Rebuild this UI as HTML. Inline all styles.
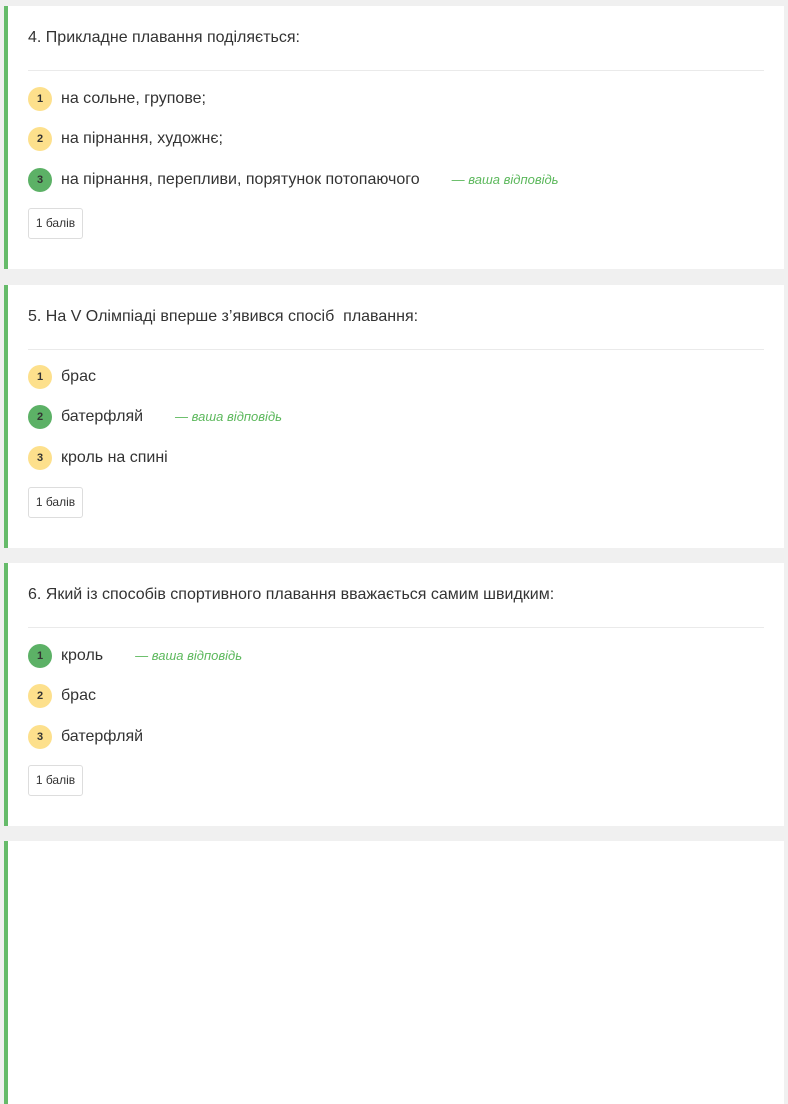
<!DOCTYPE html>
<html><head><meta charset="utf-8"><style>
*{margin:0;padding:0;box-sizing:border-box}
body{width:788px;height:849px;background:#f0f0f0;font-family:"Liberation Sans",Arial,sans-serif;color:#333;overflow:hidden;position:relative}
.card{position:absolute;left:4px;width:780px;height:263px;background:#fff;border-left:4px solid #66bb6a}
.q{position:absolute;left:20px;top:22px;font-size:16px;line-height:20px}
.hr{position:absolute;left:20px;right:20px;top:64px;border-top:1px solid #eaeaea}
.opt{position:absolute;left:20px;height:24px;font-size:16px;line-height:24px;display:flex;align-items:center;white-space:nowrap}
.c{width:24px;height:24px;border-radius:50%;background:#fde08c;font-size:11px;font-weight:bold;text-align:center;line-height:24px;margin-right:9px;color:#333}
.c.g{background:#5cb166}
.ans{color:#5cb85c;font-style:italic;font-size:13px;margin-left:32px}
.b{position:absolute;left:20px;top:202px;width:55px;height:31px;border:1px solid #ddd;border-radius:3px;font-size:12px;line-height:29px;text-align:center}
</style></head><body>
<div class="card" style="top:6px">
<div class="q">4. Прикладне плавання поділяється:</div><div class="hr"></div>
<div class="opt" style="top:81px"><span class="c">1</span>на сольне, групове;</div>
<div class="opt" style="top:121px"><span class="c">2</span>на пірнання, художнє;</div>
<div class="opt" style="top:162px"><span class="c g">3</span>на пірнання, перепливи, порятунок потопаючого<span class="ans">— ваша відповідь</span></div>
<div class="b">1 балів</div>
</div>
<div class="card" style="top:285px">
<div class="q">5. На V Олімпіаді вперше з’явився спосіб&nbsp; плавання:</div><div class="hr"></div>
<div class="opt" style="top:80px"><span class="c">1</span>брас</div>
<div class="opt" style="top:120px"><span class="c g">2</span>батерфляй<span class="ans">— ваша відповідь</span></div>
<div class="opt" style="top:161px"><span class="c">3</span>кроль на спині</div>
<div class="b">1 балів</div>
</div>
<div class="card" style="top:563px">
<div class="q">6. Який із способів спортивного плавання вважається самим швидким:</div><div class="hr"></div>
<div class="opt" style="top:81px"><span class="c g">1</span>кроль<span class="ans">— ваша відповідь</span></div>
<div class="opt" style="top:121px"><span class="c">2</span>брас</div>
<div class="opt" style="top:162px"><span class="c">3</span>батерфляй</div>
<div class="b">1 балів</div>
</div>
<div class="card" style="top:841px"></div>
</body></html>
